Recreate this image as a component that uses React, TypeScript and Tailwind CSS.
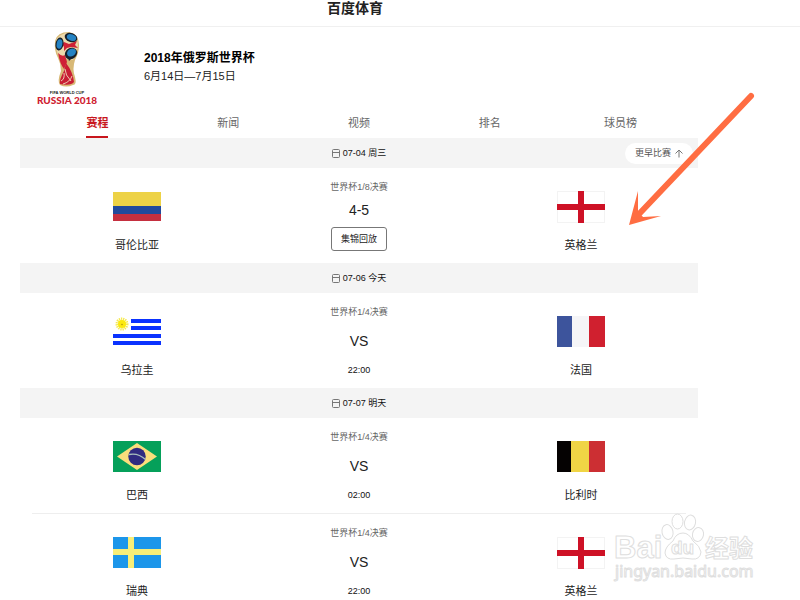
import React from "react";

type Country = "colombia" | "england" | "uruguay" | "france" | "brazil" | "belgium" | "sweden";

type Match = {
  home: Country;
  away: Country;
  stage: string;
  score?: string;
  time?: string;
};

type Day = { date: string; matches: Match[] };

const names: Record<Country, string> = {
  colombia: "哥伦比亚",
  england: "英格兰",
  uruguay: "乌拉圭",
  france: "法国",
  brazil: "巴西",
  belgium: "比利时",
  sweden: "瑞典",
};

const tabs = ["赛程", "新闻", "视频", "排名", "球员榜"];

const days: Day[] = [
  { date: "07-04 周三", matches: [{ home: "colombia", away: "england", stage: "世界杯1/8决赛", score: "4-5" }] },
  { date: "07-06 今天", matches: [{ home: "uruguay", away: "france", stage: "世界杯1/4决赛", time: "22:00" }] },
  {
    date: "07-07 明天",
    matches: [
      { home: "brazil", away: "belgium", stage: "世界杯1/4决赛", time: "02:00" },
      { home: "sweden", away: "england", stage: "世界杯1/4决赛", time: "22:00" },
    ],
  },
];

const flags: Record<Country, React.ReactNode> = {
  colombia: (
    <>
      <rect y="1" width="48" height="15" fill="#edd246" />
      <rect y="15" width="48" height="8" fill="#214a9c" />
      <rect y="23" width="48" height="7" fill="#c52f3f" />
    </>
  ),
  england: (
    <>
      <rect x="0.5" y="0.5" width="47" height="31" fill="#fff" stroke="#f3f3f3" />
      <rect x="21" width="6" height="32" fill="#ce1126" />
      <rect y="13" width="48" height="6" fill="#ce1126" />
    </>
  ),
  uruguay: (
    <>
      <rect x="18" y="3" width="30" height="4" fill="#0a32ff" />
      <rect x="18" y="10" width="30" height="4" fill="#0a32ff" />
      <rect y="18" width="48" height="4" fill="#0a32ff" />
      <rect y="25" width="48" height="4" fill="#0a32ff" />
      <circle cx="9" cy="8" r="5" fill="none" stroke="#f5e94d" strokeWidth="3" strokeDasharray="1.2 0.8" />
      <circle cx="9" cy="8" r="4" fill="#fbe90e" />
      <circle cx="9" cy="8.5" r="0.8" fill="#b59a10" />
    </>
  ),
  france: (
    <>
      <rect width="15" height="31" fill="#3d549c" />
      <rect x="15" width="17" height="31" fill="#f5f5f7" />
      <rect x="32" width="16" height="31" fill="#d0202f" />
    </>
  ),
  brazil: (
    <>
      <rect width="48" height="31" fill="#05a05a" />
      <path d="M24 2 L44 15.5 L24 29 L4 15.5Z" fill="#fade7c" />
      <circle cx="24" cy="15.5" r="8.7" fill="#302b80" />
      <path d="M16 13.5 Q25 11.5 32.5 18.5" fill="none" stroke="#a9c0bd" strokeWidth="1.3" />
    </>
  ),
  belgium: (
    <>
      <rect width="15" height="31" fill="#050202" />
      <rect x="14" width="18" height="31" fill="#f0d545" />
      <rect x="32" width="16" height="31" fill="#cc2f33" />
    </>
  ),
  sweden: (
    <>
      <rect width="48" height="31" fill="#1c96ea" />
      <rect x="15" width="6" height="31" fill="#f8ee78" />
      <rect y="12" width="48" height="6" fill="#f8ee78" />
    </>
  ),
};

function Team({ country }: { country: Country }) {
  return (
    <div className="flex flex-col items-center pt-[23px]">
      <svg width="48" height="32" viewBox="0 0 48 32" role="img" aria-label={names[country]}>
        {flags[country]}
      </svg>
      <span className="mt-[14px] text-[11px] leading-4 text-[#222]">{names[country]}</span>
    </div>
  );
}

function MatchRow({ match }: { match: Match }) {
  return (
    <div className="grid h-[95px] grid-cols-3 px-1.5">
      <Team country={match.home} />
      <div className="flex flex-col items-center pt-[13px]">
        <span className="text-[9px] leading-3 text-[#666]">{match.stage}</span>
        {match.score ? (
          <>
            <span className="mt-[7px] text-sm leading-5 text-[#222]">{match.score}</span>
            <button className="mt-[7px] h-6 rounded-[3px] border border-[#777] bg-white px-[9px] text-[9px] leading-3 text-[#222]">
              集锦回放
            </button>
          </>
        ) : (
          <>
            <span className="mt-[13px] text-sm leading-5 text-[#222]">VS</span>
            <span className="mt-[13px] text-[9px] leading-3 text-[#111]">{match.time}</span>
          </>
        )}
      </div>
      <Team country={match.away} />
    </div>
  );
}

function CalendarIcon() {
  return (
    <svg width="8" height="9" viewBox="0 0 8 9" fill="none" stroke="#777" aria-hidden="true">
      <rect x="0.5" y="0.5" width="7" height="8" rx="1" />
      <path d="M0.5 3.5H7.5" />
    </svg>
  );
}

function CupLogo() {
  return (
    <svg width="64" height="76" viewBox="0 0 64 76" role="img" aria-label="FIFA World Cup Russia 2018">
      <path
        d="M20 10 Q22 1 34 1 Q44 3 44 14 Q44 22 40 29 Q37 38 40 46 Q42 54 38 54 Q31 57 25 54 Q22 50 26 40 Q26 33 23 27 Q19 20 20 10Z"
        fill="#d8b976"
      />
      <path d="M21 10 Q24 2 34 2 Q43 5 43 14 Q42 23 38 29 L25 27 Q20 20 21 10Z" fill="#ecd9ad" />
      <path d="M29 11 L34 13 L42 10 L40 14 L43 17 L36 16 L32 17 L29 20 L29 16 L27 13Z" fill="#cf2136" />
      <path d="M23 22 Q27 26 30 24 L32 31 L29 38 Q25 33 23 22Z" fill="#cf2136" />
      <path d="M31 32 Q38 41 39 51 Q36 55 25 53 Q24 49 29 40Z" fill="#c91f34" />
      <path
        d="M30 38 Q30 44 36 50M29 42 Q30 48 26 50M37 45 Q35 51 28 53"
        fill="none"
        stroke="#f2dfc0"
        strokeWidth="0.9"
      />
      <ellipse cx="36" cy="6.5" rx="6.5" ry="4.5" fill="#16202c" transform="rotate(20 36 6.5)" />
      <ellipse cx="24.5" cy="13" rx="4" ry="6.5" fill="#16202c" transform="rotate(10 24.5 13)" />
      <ellipse cx="36" cy="22.5" rx="6.5" ry="5.5" fill="#16202c" transform="rotate(-35 36 22.5)" />
      <ellipse cx="36.5" cy="6.5" rx="4.8" ry="3.2" fill="#2583c3" transform="rotate(20 36.5 6.5)" />
      <ellipse cx="24.5" cy="13" rx="2.8" ry="4.7" fill="#2583c3" transform="rotate(10 24.5 13)" />
      <ellipse cx="36.5" cy="21.5" rx="4.8" ry="3.7" fill="#2583c3" transform="rotate(-35 36.5 21.5)" />
      <path d="M33 27 L38 26 L34 30Z" fill="#16202c" />
      <text x="32" y="63" textAnchor="middle" className="fill-[#222] font-['Liberation_Sans',sans-serif] text-[4px] font-bold">
        FIFA WORLD CUP
      </text>
      <text x="32" y="73" textAnchor="middle" className="fill-[#cf2030] font-['Lato',sans-serif] text-[10px] font-black">
        RUSSIA 2018
      </text>
    </svg>
  );
}

function Watermark() {
  return (
    <svg
      className="pointer-events-none absolute top-[512px] left-[612px]"
      width="148"
      height="72"
      viewBox="0 0 148 72"
      fill="#fff"
      stroke="#dedede"
      strokeWidth="1"
      strokeLinejoin="round"
      aria-hidden="true"
    >
      <ellipse cx="55.5" cy="20" rx="5.5" ry="7.5" transform="rotate(-12 55.5 20)" />
      <ellipse cx="65.5" cy="9.5" rx="5.5" ry="7.5" />
      <ellipse cx="78" cy="10.5" rx="5.5" ry="7.5" transform="rotate(12 78 10.5)" />
      <ellipse cx="86" cy="22.500" rx="5.5" ry="7" transform="rotate(12 86 22.500)" />
      <path d="M71 21 Q64 21 61 29 Q53 35 53 41 Q54 48 62 47 Q71 45 80 47 Q88 48 89 40 Q88 34 81 29 Q77 21 71 21Z" />
      <text x="2" y="46" className="font-['Liberation_Sans',sans-serif] text-[31px] font-bold">Bai</text>
      <text x="59" y="42" className="font-['Liberation_Sans',sans-serif] text-[19px] font-bold">du</text>
      <text x="93" y="45" className="font-['Noto_Sans_CJK_SC',sans-serif] text-[24px] font-bold">经验</text>
      <text x="3" y="65" className="font-['Noto_Sans',sans-serif] text-[16px]">jingyan.baidu.com</text>
    </svg>
  );
}

export default function App() {
  return (
    <div className="relative h-screen overflow-hidden bg-white font-['Liberation_Sans','Noto_Sans_CJK_SC',sans-serif] text-[#222]">
      <header className="border-b border-[#f0f0f0]">
        <h1 className="h-[26px] max-w-[710px] text-center text-sm leading-4 font-bold text-[#222]">百度体育</h1>
      </header>

      <main className="w-full max-w-[698px] pl-5">
        <section className="flex h-[83px] gap-[45px] pt-1 pl-[15px]">
          <CupLogo />
          <div className="pt-[18px]">
            <h2 className="text-xs leading-[18px] font-bold text-black">2018年俄罗斯世界杯</h2>
            <p className="text-[11px] leading-[18px] text-[#222]">6月14日—7月15日</p>
          </div>
        </section>

        <nav className="grid h-7 grid-cols-5 px-3">
          {tabs.map((tab, i) => (
            <a
              key={tab}
              href="#"
              className={
                i === 0
                  ? "justify-self-center border-b-2 border-[#c8161d] pt-[3px] text-[11px] leading-5 font-bold text-[#c8161d]"
                  : "justify-self-center pt-[3px] text-[11px] leading-5 text-[#666]"
              }
            >
              {tab}
            </a>
          ))}
        </nav>

        {days.map((day, i) => (
          <section key={day.date}>
            <div className="relative flex h-[30px] items-center justify-center gap-[3px] bg-[#f4f4f4]">
              <CalendarIcon />
              <h3 className="text-[9px] leading-3 text-[#111]">{day.date}</h3>
              {i === 0 && (
                <button className="absolute right-[5px] flex h-[21px] items-center gap-1 rounded-full bg-white px-[10px] text-[9px] leading-3 text-[#555]">
                  更早比赛
                  <svg width="8" height="9" viewBox="0 0 8 9" fill="none" stroke="#777" aria-hidden="true">
                    <path d="M4 8.5V1M0.5 4.5L4 1L7.5 4.5" />
                  </svg>
                </button>
              )}
            </div>
            {day.matches.map((match, j) => (
              <React.Fragment key={match.home}>
                {j > 0 && <hr className="mx-3 border-[#eee]" />}
                <MatchRow match={match} />
              </React.Fragment>
            ))}
          </section>
        ))}
      </main>

      <svg
        className="pointer-events-none absolute top-[90px] left-[625px]"
        width="130"
        height="138"
        viewBox="0 0 130 138"
        aria-hidden="true"
      >
        <path d="M126 6 L15 123" stroke="#ff6d42" strokeWidth="6" strokeLinecap="round" />
        <path d="M4 135 L13 101 L13 121 L18 127 L36 126Z" fill="#ff6d42" />
      </svg>
      <Watermark />
    </div>
  );
}
